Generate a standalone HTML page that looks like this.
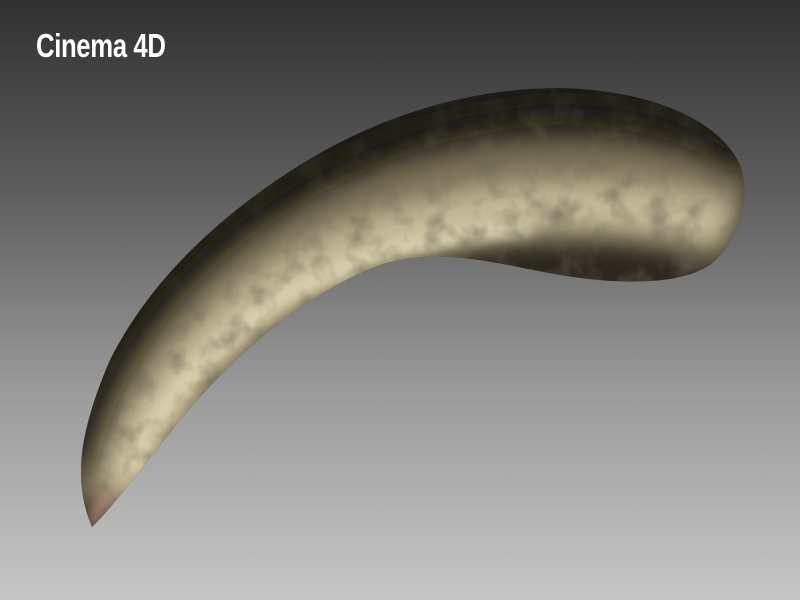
<!DOCTYPE html>
<html><head><style>
html,body{margin:0;padding:0;width:800px;height:600px;overflow:hidden}
body{background:linear-gradient(#313131 0%,#5a5a5a 30%,#9a9a9a 65%,#c6c6c6 100%);position:relative}
.t{position:absolute;left:36px;top:27px;font-family:"Liberation Sans",sans-serif;font-weight:bold;font-size:33px;color:#fff;transform:scaleX(0.78);transform-origin:0 0;letter-spacing:-0.5px}
svg{position:absolute;left:0;top:0}
</style></head><body>
<svg width="800" height="600" viewBox="0 0 800 600">
<defs>
<clipPath id="c"><path d="M92,527 C72,480 80,430 110,360 C150,280 220,215 300,165 C380,115 470,88 560,88 C650,90 720,120 740,165 C752,200 740,240 710,265 C680,285 620,285 560,275 C500,265 440,245 380,265 C300,295 230,360 180,420 C140,470 110,510 92,527 Z"/></clipPath>
<filter id="b" x="-50%" y="-50%" width="200%" height="200%"><feGaussianBlur stdDeviation="14"/></filter>
<filter id="b2" x="-50%" y="-50%" width="200%" height="200%"><feGaussianBlur stdDeviation="6"/></filter>
<filter id="n" x="0" y="0" width="100%" height="100%"><feTurbulence type="fractalNoise" baseFrequency="0.04" numOctaves="3" seed="3"/><feColorMatrix type="matrix" values="0 0 0 0 0.15  0 0 0 0 0.13  0 0 0 0 0.09  0 0 0 1.2 -0.5"/></filter>
</defs>
<g clip-path="url(#c)">
<rect width="800" height="600" fill="#2c271e"/>
<path d="M105,505 C130,420 190,335 270,277 C350,220 440,193 530,187 C615,183 690,197 735,217" fill="none" stroke="#7b6f56" stroke-width="95" filter="url(#b)"/>
<path d="M115,495 C140,420 200,340 280,287 C360,237 450,212 540,207 C620,204 690,212 730,227" fill="none" stroke="#c8bc9a" stroke-width="50" filter="url(#b)"/>
<path d="M130,470 C160,400 220,335 290,293 C370,250 450,232 530,226" fill="none" stroke="#dad0ae" stroke-width="18" filter="url(#b2)"/>
<rect width="800" height="600" filter="url(#n)"/>
<path d="M70,470 C85,380 145,290 225,225 C325,150 430,105 560,98 C660,100 720,125 745,160" fill="none" stroke="#15120d" stroke-width="34" filter="url(#b)" opacity="0.85"/>
<path d="M92,527 C95,515 100,505 110,495" fill="none" stroke="#b89478" stroke-width="10" filter="url(#b2)"/>
</g>
</svg>
<div class="t">Cinema 4D</div>
</body></html>
